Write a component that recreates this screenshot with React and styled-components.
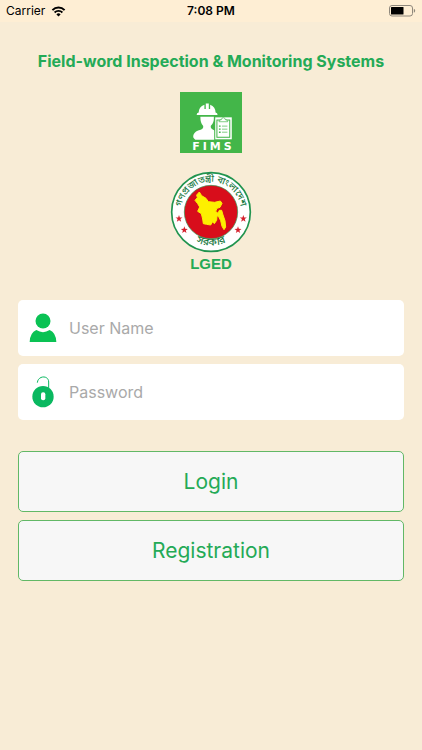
import React, { useState } from 'react'
import styled, { createGlobalStyle } from 'styled-components'

function App() {

  const [userName, setUserName] = useState('');
  const [password, setPassword] = useState('');

  return (
    <Container>
      <GlobalStyle />
      <StatusBar>
        <Carrier>
          <span>Carrier</span>
          <WifiIcon />
        </Carrier>
        <Time>7:08 PM</Time>
        <BatteryIcon />
      </StatusBar>
      <Header>
        <Title>Field-word Inspection &amp; Monitoring Systems</Title>
        <FimsLogo>
          <InspectorIcon />
          <FimsName>
            <span>F</span>
            <span>I</span>
            <span>M</span>
            <span>S</span>
          </FimsName>
        </FimsLogo>
        <Seal />
        <Agency>LGED</Agency>
      </Header>
      <Form onSubmit={(e) => e.preventDefault()}>
        <Field>
          <UserIcon />
          <Input
            aria-label="User Name"
            placeholder="User Name"
            value={userName}
            onChange={(e) => setUserName(e.target.value)}
          />
        </Field>
        <Field>
          <LockIcon />
          <Input
            type="password"
            aria-label="Password"
            placeholder="Password"
            value={password}
            onChange={(e) => setPassword(e.target.value)}
          />
        </Field>
        <Actions>
          <Button type="submit">Login</Button>
          <Button type="button">Registration</Button>
        </Actions>
      </Form>
    </Container>
  )
}

function WifiIcon() {
  return (
    <svg width="15" height="11" viewBox="0 0 14 11" aria-hidden="true">
      <path d="M0.9 4.1a8.7 8.7 0 0 1 12.2 0" fill="none" stroke="#000" strokeWidth="2" />
      <path d="M3.1 6.5a5.6 5.6 0 0 1 7.8 0" fill="none" stroke="#000" strokeWidth="1.8" />
      <path d="M4.9 8.4a3 3 0 0 1 4.2 0L7 10.6z" fill="#000" />
    </svg>
  )
}

function BatteryIcon() {
  return (
    <Battery width="27" height="12" viewBox="0 0 27 12" aria-hidden="true">
      <rect x="0.5" y="0.5" width="23" height="10.5" rx="2.5" fill="none" stroke="#8f887c" />
      <rect x="2" y="2" width="12.5" height="7.5" rx="0.5" fill="#000" />
      <path d="M24.8 3.8q1.4 0.5 1.4 2t-1.4 2z" fill="#8f887c" />
    </Battery>
  )
}

function InspectorIcon() {
  return (
    <svg width="62" height="50" viewBox="0 3 183 148" aria-hidden="true">
      <g fill="#fff">
        <path d="M55 64q0-16 17-23v12h4V37h9v16h4V41q16 7 16 23q6 1 6 7H49q0-6 6-7z" />
        <path d="M60 76h40q1 18-9 27q-2 8 7 12l8 4v25H45q-9-5-5-15q4-10 21-14q10-4 7-12q-8-8-8-27z" />
      </g>
      <rect x="101" y="74" width="55" height="72" fill="#43b649" />
      <rect x="104" y="78" width="49" height="65" fill="#fff" />
      <g fill="none" stroke="#43b649" strokeWidth="3">
        <rect x="109" y="86" width="38" height="51" />
        <path d="M115 91q0-6 7-6q1-6 6-6t6 6q7 0 7 6z" fill="#fff" strokeWidth="2" />
        <path d="M124 104h16M124 113h16M124 122h16" strokeWidth="2" />
        <path d="M115 104h5M115 113h5M115 122h5" strokeWidth="4" />
      </g>
    </svg>
  )
}

const STAR = 'M0-11L2.6-3.5L10.5-3.3L4.2 1.3L6.5 9L0 4.4L-6.5 9L-4.2 1.3L-10.5-3.3L-2.6-3.5Z'

function Seal() {
  return (
    <SealSvg width="82" height="82" viewBox="0 0 246 246" role="img" aria-label="Seal">
      <defs>
        <path id="seal-top" d="M37 149A90 90 0 1 1 209 149" />
        <path id="seal-bottom" d="M37 178A104 104 0 0 0 209 178" />
      </defs>
      <circle cx="123" cy="123" r="118" fill="#fff" stroke="#21944f" strokeWidth="5" />
      <circle cx="123" cy="123" r="80" fill="#d80d1b" stroke="#2f9a55" strokeWidth="2" />
      <path
        d="M80 72L88 63L95 74L108 82L115 92L134 94L151 90L156 97L150 109L141 112L137 121L144 127L148 118L155 118L159 132L165 149L167 168L162 176L156 166L152 149L146 137L141 134L140 148L133 158L128 152L122 162L110 160L100 158L98 144L94 128L83 121L89 108L83 98L75 88L82 80Z"
        fill="#fdf000"
        stroke="#fdf000"
        strokeWidth="3"
        strokeLinejoin="round"
      />
      <g fill="#d5202c">
        <path d={STAR} transform="translate(27 143)" />
        <path d={STAR} transform="translate(43 177)" />
        <path d={STAR} transform="translate(204 177)" />
        <path d={STAR} transform="translate(220 143)" />
      </g>
      <SealText>
        <textPath href="#seal-top" startOffset="50%">গণপ্রজাতন্ত্রী বাংলাদেশ</textPath>
      </SealText>
      <SealText $large>
        <textPath href="#seal-bottom" startOffset="50%">সরকার</textPath>
      </SealText>
    </SealSvg>
  )
}

function UserIcon() {
  return (
    <svg width="28" height="30" viewBox="0 0 84 90" aria-hidden="true">
      <g fill="#0ac254">
        <circle cx="42" cy="24" r="22.5" />
        <path d="M22 51q20 13 40 0q19 8 20 36H2q1-28 20-36z" />
      </g>
    </svg>
  )
}

function LockIcon() {
  return (
    <svg width="28" height="32" viewBox="0 0 84 96" aria-hidden="true">
      <path d="M25 20C27-2 59-3 59 18V40" fill="none" stroke="#0ab860" strokeWidth="3" />
      <circle cx="42" cy="62" r="32" fill="#0ab860" />
      <rect x="36" y="49" width="13" height="24" rx="6" fill="#fff" />
    </svg>
  )
}

export default App

const GlobalStyle = createGlobalStyle`
  *{
    box-sizing: border-box;
  }
  body{
    margin: 0;
    background-color: #f8ecd6;
    font-family: Inter, "Liberation Sans", sans-serif;
  }
`

const Container = styled.div`
  display: flex;
  flex-direction: column;
`

const StatusBar = styled.div`
  display: grid;
  grid-template-columns: 1fr auto 1fr;
  align-items: center;
  height: 22px;
  padding: 0 6px;
  background-color: #feeed4;
  color: #000;
  font-size: 12px;
  line-height: 20px;
`

const Carrier = styled.div`
  display: flex;
  align-items: center;
  gap: 6px;
`

const Time = styled.span`
  font-weight: 600;
`

const Battery = styled.svg`
  justify-self: end;
`

const Header = styled.header`
  display: flex;
  flex-direction: column;
  align-items: center;
  padding: 28px 18px 0;
  color: #24aa56;
`

const Title = styled.h1`
  margin: 0 0 20px;
  font-size: 16px;
  font-weight: 700;
  line-height: 22px;
  text-align: center;
`

const FimsLogo = styled.div`
  display: flex;
  flex-direction: column;
  width: 62px;
  height: 61px;
  background-color: #43b649;
  overflow: hidden;
`

const FimsName = styled.div`
  display: flex;
  justify-content: center;
  gap: 3px;
  padding-left: 2px;
  color: #fff;
  font-family: "DejaVu Sans", sans-serif;
  font-size: 11px;
  font-weight: 700;
  line-height: 10px;
`

const SealSvg = styled.svg`
  margin-top: 18px;
`

const SealText = styled.text`
  fill: #1b7a43;
  font-family: "Noto Sans Bengali", "Noto Sans", sans-serif;
  font-size: ${props => props.$large ? '32px' : '28px'};
  font-weight: 500;
  text-anchor: middle;
`

const Agency = styled.p`
  margin: 0;
  font-family: "Liberation Sans", sans-serif;
  font-size: 15px;
  font-weight: 700;
  line-height: 22px;
`

const Form = styled.form`
  display: flex;
  flex-direction: column;
  gap: 8px;
  padding: 25px 18px;
`

const Field = styled.label`
  display: flex;
  align-items: center;
  gap: 12px;
  height: 56px;
  padding: 0 11px;
  border-radius: 5px;
  background-color: #fff;
`

const Input = styled.input`
  flex: 1;
  min-width: 0;
  padding: 0;
  border: 0;
  outline: 0;
  background: none;
  color: #333;
  font-family: inherit;
  font-size: 16px;
  &::placeholder{
    color: #a9a9a9;
    opacity: 1;
  }
`

const Actions = styled.div`
  display: flex;
  flex-direction: column;
  gap: 8px;
  margin-top: 23px;
`

const Button = styled.button`
  height: 61px;
  border: 1px solid #62b866;
  border-radius: 5px;
  background-color: #f7f7f7;
  color: #24aa56;
  font-family: inherit;
  font-size: 21px;
  cursor: pointer;
`
